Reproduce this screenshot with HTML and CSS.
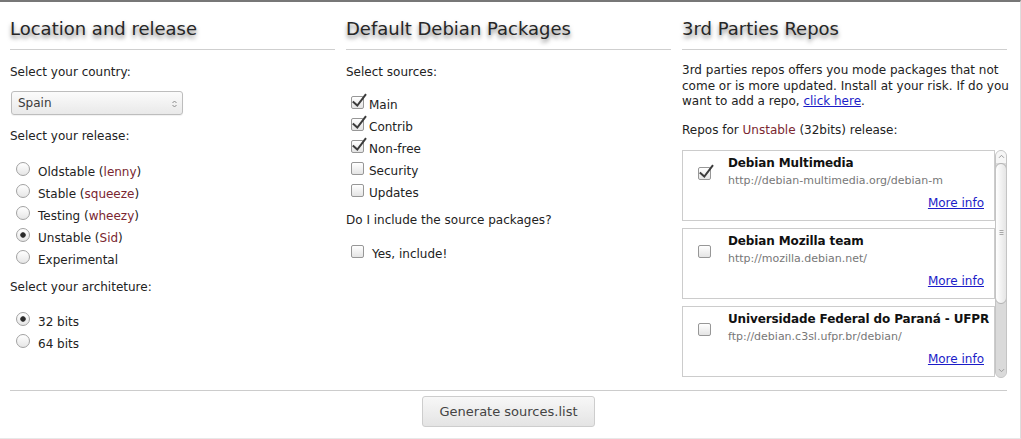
FILE: index.html
```html
<!DOCTYPE html>
<html lang="en">
<head>
<meta charset="utf-8">
<title>Debian sources.list generator</title>
<link rel="stylesheet" href="styles.css">
</head>
<body>
<div class="page">
  <div class="cols">
    <section class="col">
      <h2 class="title">Location and release</h2>
      <p class="label">Select your country:</p>
      <div class="select-wrap">
        <select class="select"><option>Spain</option></select>
        <svg class="select-arrows" width="5" height="8" viewBox="0 0 5 8"><path d="M0.5 3 L2.5 1 L4.5 3 M0.5 5 L2.5 7 L4.5 5" fill="none" stroke="#8a8a8a" stroke-width="1"/></svg>
      </div>
      <p class="label label-after-select">Select your release:</p>
      <ul class="opts opts-release">
        <li><label class="opt"><input type="radio" name="rel" class="radio"><span>Oldstable (<span class="code">lenny</span>)</span></label></li>
        <li><label class="opt"><input type="radio" name="rel" class="radio"><span>Stable (<span class="code">squeeze</span>)</span></label></li>
        <li><label class="opt"><input type="radio" name="rel" class="radio"><span>Testing (<span class="code">wheezy</span>)</span></label></li>
        <li><label class="opt"><input type="radio" name="rel" class="radio" checked><span>Unstable (<span class="code">Sid</span>)</span></label></li>
        <li><label class="opt"><input type="radio" name="rel" class="radio"><span>Experimental</span></label></li>
      </ul>
      <p class="label label-after-list">Select your architeture:</p>
      <ul class="opts opts-arch">
        <li><label class="opt"><input type="radio" name="arch" class="radio" checked><span>32 bits</span></label></li>
        <li><label class="opt"><input type="radio" name="arch" class="radio"><span>64 bits</span></label></li>
      </ul>
    </section>

    <section class="col">
      <h2 class="title">Default Debian Packages</h2>
      <p class="label">Select sources:</p>
      <ul class="opts opts-sources">
        <li><label class="opt"><span class="cb-wrap"><input type="checkbox" class="cb" checked><svg class="tick" width="17" height="16" viewBox="0 0 17 16"><path d="M1.8 8.6 L6.3 12.6 L15 1.2" fill="none" stroke="#3c3c3c" stroke-width="2"/></svg></span><span>Main</span></label></li>
        <li><label class="opt"><span class="cb-wrap"><input type="checkbox" class="cb" checked><svg class="tick" width="17" height="16" viewBox="0 0 17 16"><path d="M1.8 8.6 L6.3 12.6 L15 1.2" fill="none" stroke="#3c3c3c" stroke-width="2"/></svg></span><span>Contrib</span></label></li>
        <li><label class="opt"><span class="cb-wrap"><input type="checkbox" class="cb" checked><svg class="tick" width="17" height="16" viewBox="0 0 17 16"><path d="M1.8 8.6 L6.3 12.6 L15 1.2" fill="none" stroke="#3c3c3c" stroke-width="2"/></svg></span><span>Non-free</span></label></li>
        <li><label class="opt"><span class="cb-wrap"><input type="checkbox" class="cb"></span><span>Security</span></label></li>
        <li><label class="opt"><span class="cb-wrap"><input type="checkbox" class="cb"></span><span>Updates</span></label></li>
      </ul>
      <p class="label label-after-list">Do I include the source packages?</p>
      <ul class="opts opts-include">
        <li><label class="opt opt-wide"><span class="cb-wrap"><input type="checkbox" class="cb"></span><span>Yes, include!</span></label></li>
      </ul>
    </section>

    <section class="col">
      <h2 class="title">3rd Parties Repos</h2>
      <p class="intro">3rd parties repos offers you mode packages that not come or is more updated. Install at your risk. If do you want to add a repo, <a href="#" class="link">click here</a>.</p>
      <p class="label label-repos">Repos for <span class="code">Unstable</span> (32bits) release:</p>
      <div class="repos">
        <div class="repo-list">
          <div class="repo">
            <span class="cb-wrap cb-repo"><input type="checkbox" class="cb" checked><svg class="tick" width="17" height="16" viewBox="0 0 17 16"><path d="M1.8 8.6 L6.3 12.6 L15 1.2" fill="none" stroke="#3c3c3c" stroke-width="2"/></svg></span>
            <div class="repo-body">
              <div class="repo-name">Debian Multimedia</div>
              <div class="repo-url">http://debian-multimedia.org/debian-m</div>
              <div class="repo-more"><a href="#" class="link">More info</a></div>
            </div>
          </div>
          <div class="repo">
            <span class="cb-wrap cb-repo"><input type="checkbox" class="cb"></span>
            <div class="repo-body">
              <div class="repo-name">Debian Mozilla team</div>
              <div class="repo-url">http://mozilla.debian.net/</div>
              <div class="repo-more"><a href="#" class="link">More info</a></div>
            </div>
          </div>
          <div class="repo">
            <span class="cb-wrap cb-repo"><input type="checkbox" class="cb"></span>
            <div class="repo-body">
              <div class="repo-name">Universidade Federal do Paraná - UFPR</div>
              <div class="repo-url">ftp://debian.c3sl.ufpr.br/debian/</div>
              <div class="repo-more"><a href="#" class="link">More info</a></div>
            </div>
          </div>
        </div>
        <div class="scrollbar" aria-hidden="true">
          <div class="sb-btn sb-up"><svg width="7" height="5" viewBox="0 0 7 5"><path d="M1 3.8 L3.5 1.3 L6 3.8" fill="none" stroke="#9a9a9a" stroke-width="1"/></svg></div>
          <div class="sb-thumb"><svg width="5" height="6" viewBox="0 0 5 6"><path d="M0.5 0.5 H4.5 M0.5 2.5 H4.5 M0.5 4.5 H4.5" stroke="#a8a8a8" stroke-width="1"/></svg></div>
          <div class="sb-track"></div>
          <div class="sb-btn sb-down"><svg width="7" height="5" viewBox="0 0 7 5"><path d="M1 1.2 L3.5 3.7 L6 1.2" fill="none" stroke="#9a9a9a" stroke-width="1"/></svg></div>
        </div>
      </div>
    </section>
  </div>
  <div class="footer">
    <button class="btn" type="button">Generate sources.list</button>
  </div>
</div>
</body>
</html>
```
FILE: styles.css
```css
* { box-sizing: border-box; }

body {
  margin: 0;
  background: #fff;
  color: #222;
  font-family: "DejaVu Sans", Verdana, sans-serif;
  font-size: 12px;
}

.page {
  display: flex;
  flex-direction: column;
  height: 439px;
  border-top: 2px solid #777;
  border-right: 1px solid #ddd;
  border-bottom: 1px solid #e8e8e8;
  padding: 0 13px 0 10px;
}

.cols {
  flex: 1;
  display: grid;
  grid-template-columns: repeat(3, 325px);
  column-gap: 11px;
}

.col { min-width: 0; }

.title {
  margin: 16px 0 0;
  padding-bottom: 9px;
  border-bottom: 1px solid #cfcfcf;
  font-size: 18px;
  line-height: 22px;
  font-weight: normal;
  color: #262626;
  text-shadow: 0 3px 4px rgba(0, 0, 0, 0.5);
}

.label {
  margin: 14px 0 0;
  line-height: 16px;
}
.label-after-select { margin-top: 13px; }
.label-after-list { margin-top: 8px; }
.label-repos { margin-top: 12px; }

.code { color: #7a2630; }

/* select */
.select-wrap {
  position: relative;
  width: 172px;
  height: 24px;
  margin: 11px 0 0 1px;
}
.select {
  appearance: none;
  -webkit-appearance: none;
  display: block;
  width: 100%;
  height: 100%;
  margin: 0;
  padding: 0 0 0 6px;
  border: 1px solid #bdbdbd;
  border-radius: 3px;
  background: linear-gradient(#fbfbfb, #e9e9e9);
  box-shadow: 0 1px 1px rgba(0, 0, 0, 0.06);
  color: #3a3a3a;
  font-family: inherit;
  font-size: 12px;
}
.select-arrows {
  position: absolute;
  left: 161px;
  top: 8.5px;
  pointer-events: none;
}

/* option lists */
.opts {
  list-style: none;
  margin: 0;
  padding: 0;
}
.opts-release { margin-top: 17px; }
.opts-arch { margin-top: 16px; }
.opts-sources { margin-top: 14px; }
.opts-include { margin-top: 15px; }

.opt {
  display: flex;
  align-items: flex-start;
  height: 22px;
  line-height: 22px;
}

.radio {
  appearance: none;
  -webkit-appearance: none;
  flex: none;
  width: 14px;
  height: 14px;
  margin: 1px 8px 0 6px;
  border: 1px solid #a2a2a2;
  border-radius: 50%;
  background: linear-gradient(#ffffff, #e6e6e6);
}
.radio:checked {
  background:
    radial-gradient(circle, #2a2a2a 0, #2a2a2a 1.9px, #555 2.5px, rgba(0,0,0,0) 3.1px),
    linear-gradient(#ffffff, #e6e6e6);
}

.cb-wrap {
  position: relative;
  display: block;
  flex: none;
  width: 13px;
  height: 13px;
  margin: 2px 5px 0 5px;
}
.opt-wide .cb-wrap { margin-right: 8px; }
.cb {
  appearance: none;
  -webkit-appearance: none;
  display: block;
  width: 13px;
  height: 13px;
  margin: 0;
  border: 1px solid #979797;
  border-radius: 2px;
  background: linear-gradient(#ffffff, #e4e4e4);
}
.tick {
  position: absolute;
  left: 0;
  top: -3px;
  pointer-events: none;
}

/* 3rd party column */
.intro {
  margin: 13px -4px 0 0;
  line-height: 15.5px;
}
.link { color: #1c1cc8; text-decoration: underline; }

.repos {
  display: flex;
  height: 228px;
  margin-top: 12px;
}
.repo-list {
  flex: 1;
  min-width: 0;
  overflow: hidden;
}
.repo {
  display: flex;
  align-items: flex-start;
  height: 71px;
  margin-bottom: 7px;
  padding: 4px 10px 0 15px;
  border: 1px solid #cccccc;
  background: #fff;
}
.cb-repo { margin: 12px 17px 0 0; }
.repo-body { flex: 1; min-width: 0; }
.repo-name {
  font-weight: bold;
  line-height: 16px;
  color: #111;
  letter-spacing: -0.12px;
  white-space: nowrap;
}
.repo-url {
  margin-top: 3px;
  font-size: 11px;
  line-height: 14px;
  color: #777;
  white-space: nowrap;
}
.repo-more {
  margin-top: 7px;
  line-height: 16px;
  text-align: right;
}

/* scrollbar drawn beside the list */
.scrollbar {
  flex: none;
  display: flex;
  flex-direction: column;
  width: 12px;
  border: 1px solid #c4c4c4;
  border-radius: 6px;
  background: #dadada;
  overflow: hidden;
}
.sb-btn {
  flex: none;
  height: 12px;
  display: flex;
  align-items: center;
  justify-content: center;
}
.sb-up { background: #f6f6f6; }
.sb-down { background: #dadada; }
.sb-thumb {
  flex: none;
  height: 141px;
  margin: 0 -1px;
  display: flex;
  align-items: center;
  justify-content: center;
  border: 1px solid #b2b2b2;
  border-radius: 6px;
  background: linear-gradient(to right, #ffffff, #e5e5e5);
}
.sb-track { flex: 1; }

/* footer */
.footer {
  display: flex;
  justify-content: center;
  border-top: 1px solid #cccccc;
  padding: 5px 0 11px;
}
.btn {
  height: 31px;
  padding: 0 16px;
  border: 1px solid #cdcdcd;
  border-radius: 3px;
  background: linear-gradient(#f7f7f7, #e4e4e4);
  color: #444;
  font-family: "DejaVu Sans", Verdana, sans-serif;
  font-size: 13px;
}
```
